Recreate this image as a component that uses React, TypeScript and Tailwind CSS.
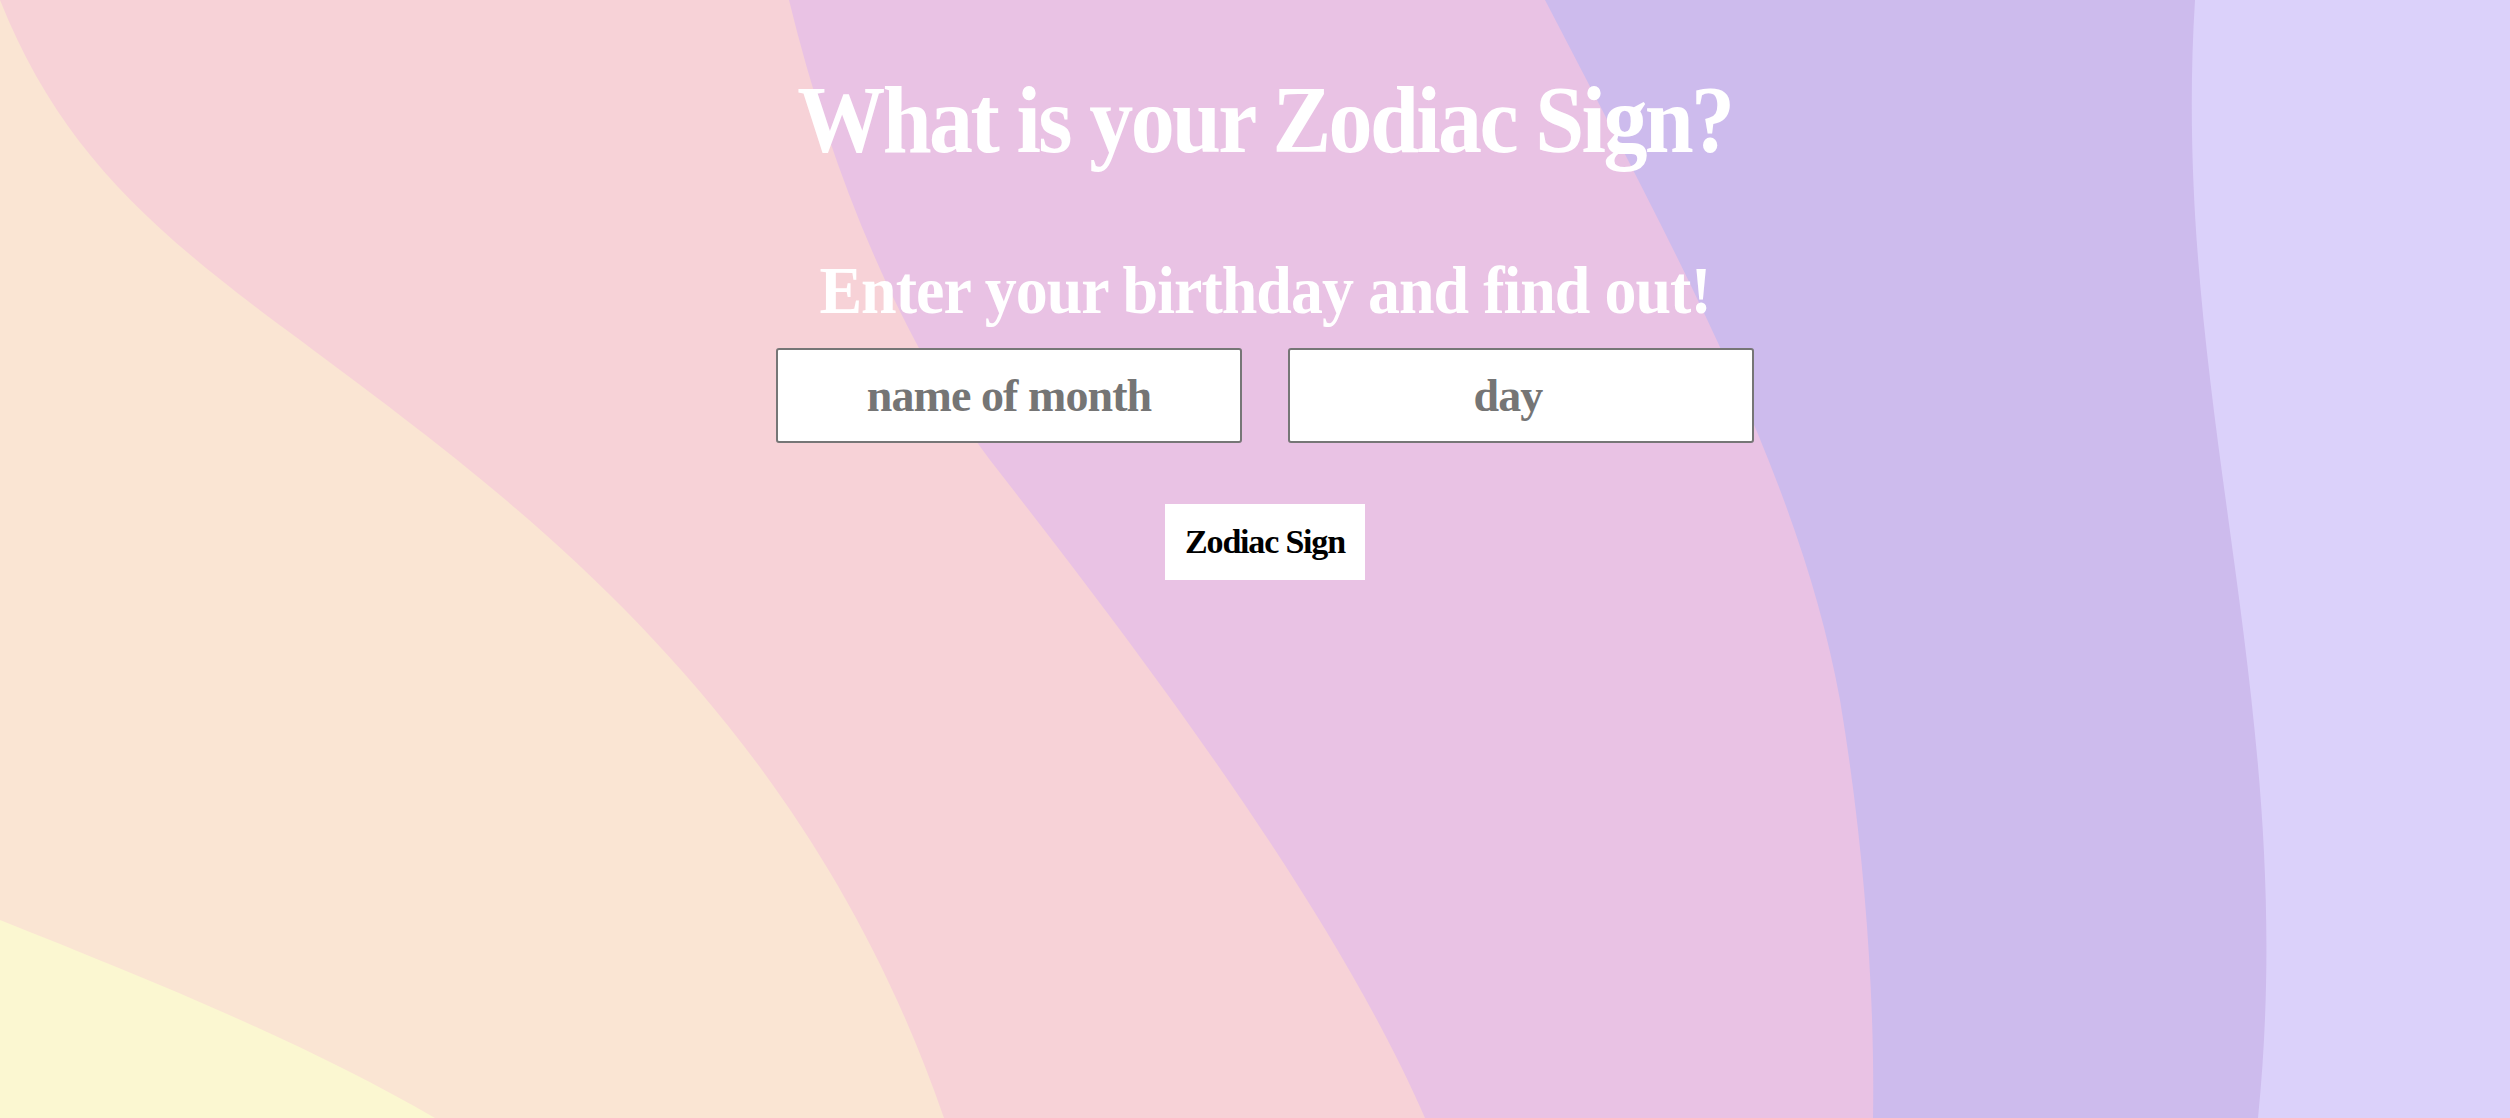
import React from "react";

function Waves() {
  return (
    <svg
      className="absolute inset-0 w-full h-full"
      viewBox="0 0 2510 1118"
      preserveAspectRatio="none"
      aria-hidden="true"
    >
      <rect x="0" y="0" width="2510" height="1118" fill="#dbd1fa" />
      <path d="M0,0 L2195,0 C2170,400 2300,700 2258,1118 L0,1118 Z" fill="#cdbbed" />
      <path d="M0,0 L1545,0 C1680,260 1800,480 1840,700 C1865,850 1875,1000 1873,1118 L0,1118 Z" fill="#e9c2e4" />
      <path d="M0,0 L789,0 C830,170 900,340 990,460 C1130,640 1330,900 1425,1118 L0,1118 Z" fill="#f7d2d7" />
      <path d="M0,0 C60,150 150,230 300,340 C500,490 800,700 944,1118 L0,1118 Z" fill="#fae5d3" />
      <path d="M0,920 C150,980 300,1040 435,1118 L0,1118 Z" fill="#fbf7d1" />
    </svg>
  );
}

export default function App() {
  return (
    <div
      className="relative w-full min-h-[1118px] overflow-hidden"
      style={{ fontFamily: "'Liberation Serif', 'Times New Roman', serif" }}
    >
      <Waves />
      <div className="relative flex flex-col items-center pl-[20px]">
        <h1 className="mt-[72px] text-[96px] leading-none font-bold text-white tracking-[-0.03em] scale-x-[0.917] whitespace-nowrap">
          What is your Zodiac Sign?
        </h1>
        <h2 className="mt-[88px] text-[68px] leading-none font-bold text-white tracking-[-0.015em] scale-x-[0.94] whitespace-nowrap">
          Enter your birthday and find out!
        </h2>
        <div className="mt-[24px] flex gap-[46px]">
          <input
            type="text"
            placeholder="name of month"
            className="w-[466px] h-[95px] bg-white border-2 border-[#767676] rounded-[3px] text-center text-[46px] font-bold tracking-[-0.02em] text-black placeholder:text-[#757575] outline-none"
          />
          <input
            type="text"
            placeholder="day"
            className="w-[466px] h-[95px] bg-white border-2 border-[#767676] rounded-[3px] pr-[26px] text-center text-[46px] font-bold tracking-[-0.02em] text-black placeholder:text-[#757575] outline-none"
          />
        </div>
        <button
          type="button"
          className="mt-[61px] w-[200px] h-[76px] bg-white text-black text-[34px] font-bold tracking-[-0.035em] leading-none"
        >
          Zodiac Sign
        </button>
      </div>
    </div>
  );
}
